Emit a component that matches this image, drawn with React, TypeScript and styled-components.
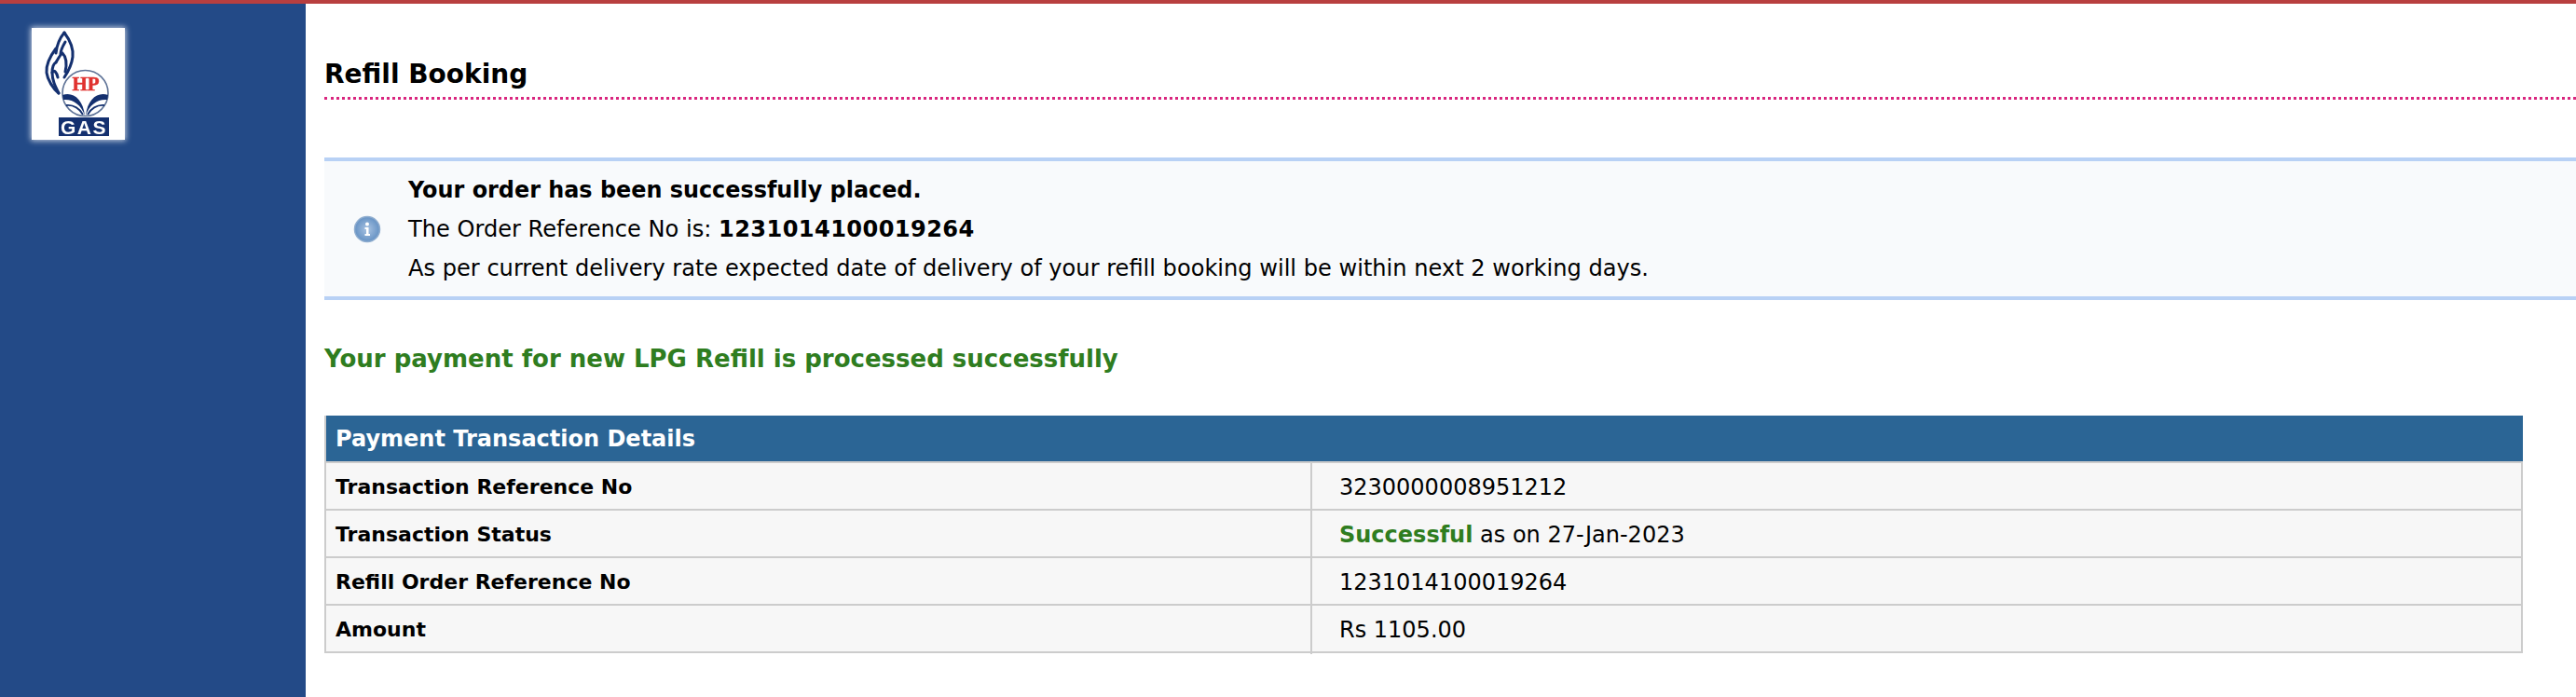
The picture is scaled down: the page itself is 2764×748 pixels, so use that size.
import React from 'react';
import styled, { createGlobalStyle } from 'styled-components';

const GlobalStyle = createGlobalStyle`
  html, body {
    margin: 0;
    padding: 0;
    background: #fff;
  }
  body {
    font-family: 'DejaVu Sans', Verdana, sans-serif;
    font-size: 24px;
    color: #000;
  }
`;

const SPage = styled.div`
  width: 2764px;
  height: 748px;
  overflow: hidden;
  border-top: 4px solid #b83f3f;
  box-sizing: border-box;
  display: flex;
`;

const SSidebar = styled.aside`
  width: 328px;
  flex: none;
  background: #234a87;
  padding: 26px 0 0 34px;
  box-sizing: border-box;
`;

const SLogo = styled.div`
  width: 100px;
  height: 120px;
  background: #fff;
  box-shadow: 0 0 6px 1px rgba(255, 255, 255, 0.75);

  svg {
    display: block;
    filter: blur(0.5px);
  }
`;

const SMain = styled.main`
  flex: 1;
  min-width: 0;
  padding-left: 20px;
`;

const STitle = styled.h1`
  margin: 0;
  height: 103px;
  box-sizing: border-box;
  padding-top: 60px;
  font-size: 28px;
  line-height: 32px;
  font-weight: bold;
  border-bottom: 3px dotted #d9267f;
`;

const SInfo = styled.div`
  margin-top: 62px;
  height: 153px;
  box-sizing: border-box;
  border-top: 4px solid #b8d1f5;
  border-bottom: 4px solid #b8d1f5;
  background: #f8fafc;
  display: flex;
  align-items: center;
`;

const SInfoIcon = styled.svg`
  width: 30px;
  height: 30px;
  flex: none;
  margin-left: 31px;
  filter: blur(0.4px);
`;

const SInfoText = styled.div`
  margin-left: 29px;
  font-size: 24.1px;
  line-height: 42px;
`;

const SInfoHead = styled.div`
  font-size: 23.9px;
  font-weight: bold;
`;

const SOrderNo = styled.b`
  letter-spacing: 0.4px;
`;

const SSuccess = styled.h2`
  margin: 45px 0 0;
  font-size: 26px;
  line-height: 36px;
  font-weight: bold;
  color: #2f7d1f;
`;

const STable = styled.div`
  margin-top: 43px;
  width: 2359px;
  border-left: 2px solid #cccccc;
  border-right: 2px solid #cccccc;
  box-sizing: border-box;
`;

const SHead = styled.div`
  height: 49px;
  margin-right: -2px;
  padding-left: 10px;
  background: #2b6595;
  color: #fff;
  font-weight: bold;
  line-height: 51px;
`;

const SRow = styled.div`
  height: 51px;
  box-sizing: border-box;
  border-top: 2px solid #cccccc;
  background: #f7f7f7;
  display: grid;
  grid-template-columns: 1056px 1fr;
  line-height: 52px;

  &:last-child {
    height: 53px;
    border-bottom: 2px solid #cccccc;
  }
`;

const SLabel = styled.div`
  padding-left: 10px;
  font-size: 22px;
  font-weight: bold;
`;

const SValue = styled.div`
  padding-left: 29px;
  border-left: 2px solid #cccccc;
`;

const SGreen = styled.span`
  color: #2f7d1f;
  font-weight: bold;
`;

const HpLogo = () => (
  <svg width="100" height="120" viewBox="0 0 100 120">
    <g fill="none" stroke="#14306f" strokeWidth="3" strokeLinecap="round">
      <path d="M35 5 C30 11 27 18 26 27" />
      <path d="M35 5 C41 13 45 22 44 31 C43 39 39 47 35 53" />
      <path d="M26 37 C29 32 31 28 33 27 C37 31 38 38 36 47" />
      <path d="M36 15 C33 20 31 24 31 28" />
      <path d="M26 22 C20 30 15 39 16 48 C17 56 23 65 29 70" />
      <path d="M29 70 C25 62 22 56 22 48 C24 44 27 48 28 53" />
      <path d="M22 48 C22 42 24 38 26 37" />
    </g>
    <circle cx="57.5" cy="70" r="24.5" fill="#fff" stroke="#5f7397" strokeWidth="1.6" />
    <text x="58" y="67" textAnchor="middle" stroke="#e0322f" strokeWidth="0.5" fontFamily="'Liberation Serif', serif" fontWeight="bold" fontSize="21" fill="#e0322f">HP</text>
    <path d="M33 72 C44 68 55 76 57 94 C53 82 44 76 34 77 Z" fill="#14306f" />
    <path d="M82 72 C71 68 60 76 58 94 C62 82 71 76 81 77 Z" fill="#14306f" />
    <path d="M37 83 C45 82 52 87 55 93" fill="none" stroke="#14306f" strokeWidth="1.8" />
    <path d="M78 83 C70 82 63 87 60 93" fill="none" stroke="#14306f" strokeWidth="1.8" />
    <rect x="29" y="96" width="54" height="20" fill="#14306f" />
    <text x="56" y="114" textAnchor="middle" letterSpacing="1.5" fontFamily="'Liberation Sans', sans-serif" fontWeight="bold" fontSize="21" fill="#fff">GAS</text>
  </svg>
);

const InfoIcon = () => (
  <SInfoIcon viewBox="0 0 30 30">
    <defs>
      <radialGradient id="infoFill" cx="50%" cy="50%" r="55%">
        <stop offset="0%" stopColor="#a9c3e2" />
        <stop offset="100%" stopColor="#5f8dc1" />
      </radialGradient>
    </defs>
    <circle cx="15" cy="15" r="13.5" fill="url(#infoFill)" stroke="#8fadcf" strokeWidth="1.5" />
    <circle cx="15" cy="9.5" r="2" fill="#fff" />
    <path d="M12.5 13 H16.5 V20 H18 V22 H12.5 V20 H14 V15 H12.5 Z" fill="#fff" />
  </SInfoIcon>
);

const App = () => {
  return (
    <SPage>
      <GlobalStyle />
      <SSidebar>
        <SLogo>
          <HpLogo />
        </SLogo>
      </SSidebar>
      <SMain>
        <STitle>Refill Booking</STitle>
        <SInfo>
          <InfoIcon />
          <SInfoText>
            <SInfoHead>Your order has been successfully placed.</SInfoHead>
            <div>
              The Order Reference No is: <SOrderNo>1231014100019264</SOrderNo>
            </div>
            <div>As per current delivery rate expected date of delivery of your refill booking will be within next 2 working days.</div>
          </SInfoText>
        </SInfo>
        <SSuccess>Your payment for new LPG Refill is processed successfully</SSuccess>
        <STable>
          <SHead>Payment Transaction Details</SHead>
          <SRow>
            <SLabel>Transaction Reference No</SLabel>
            <SValue>3230000008951212</SValue>
          </SRow>
          <SRow>
            <SLabel>Transaction Status</SLabel>
            <SValue>
              <SGreen>Successful</SGreen> as on 27-Jan-2023
            </SValue>
          </SRow>
          <SRow>
            <SLabel>Refill Order Reference No</SLabel>
            <SValue>1231014100019264</SValue>
          </SRow>
          <SRow>
            <SLabel>Amount</SLabel>
            <SValue>Rs 1105.00</SValue>
          </SRow>
        </STable>
      </SMain>
    </SPage>
  );
};

export default App;
